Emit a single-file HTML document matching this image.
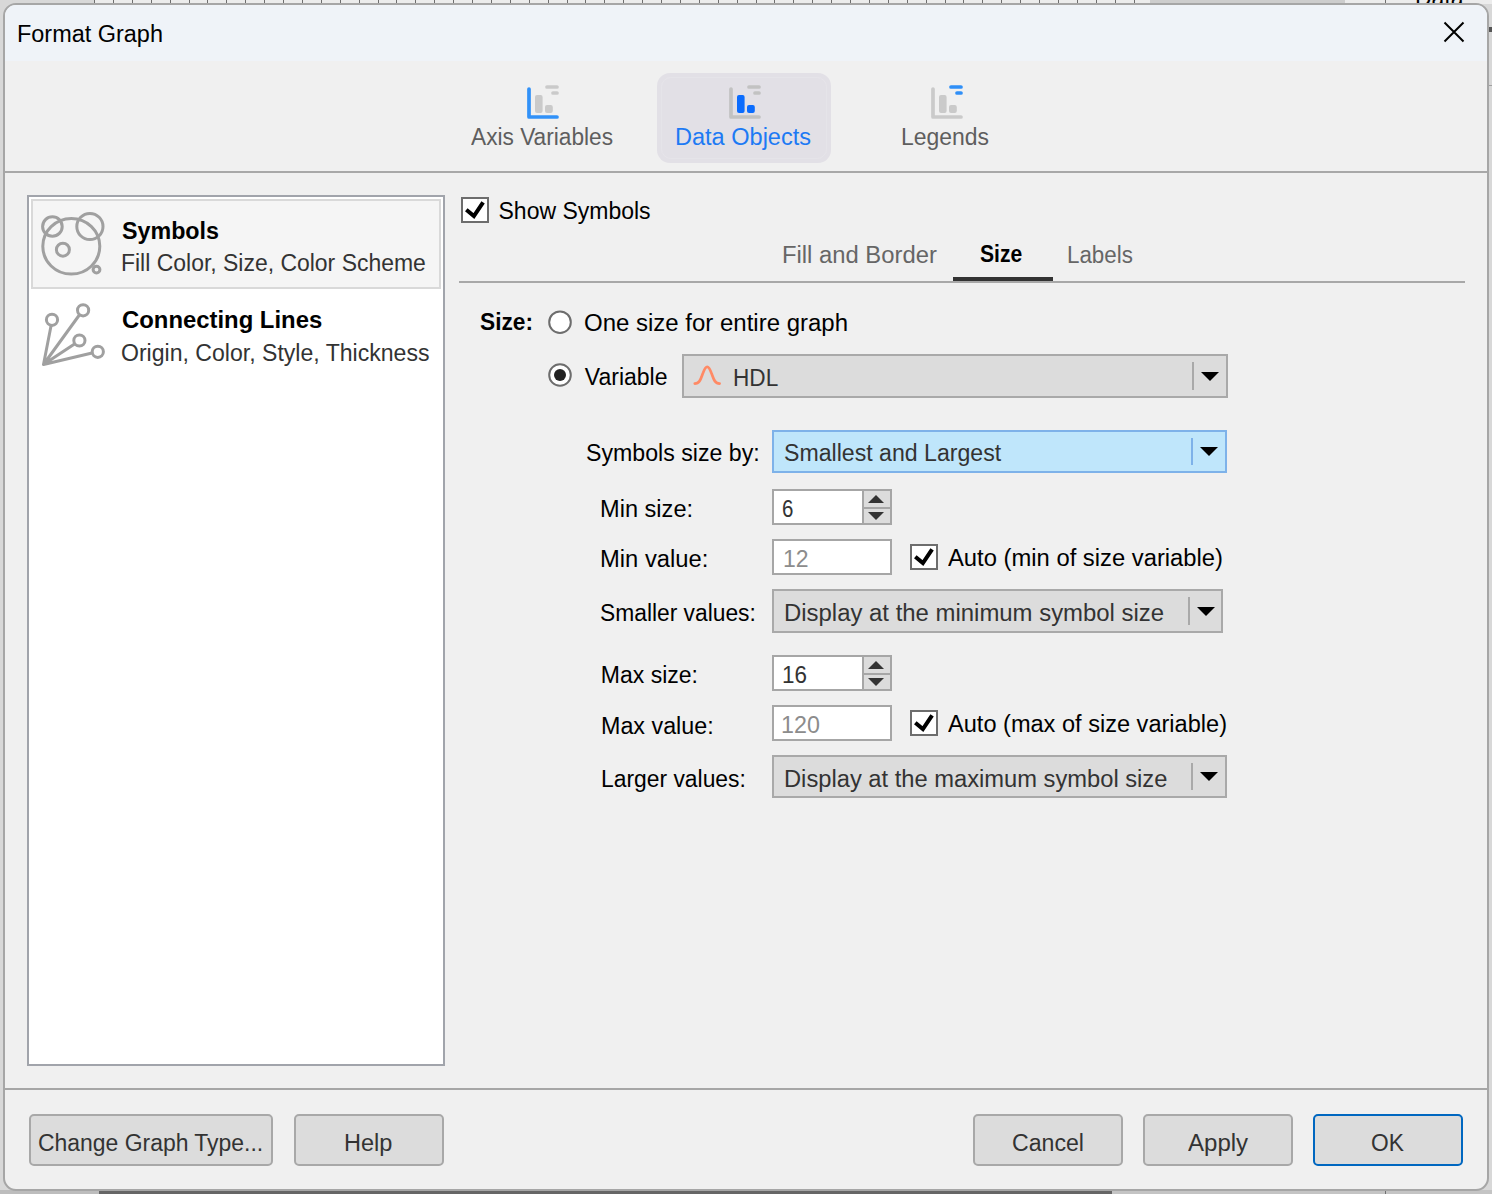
<!DOCTYPE html><html><head><meta charset="utf-8"><style>
html,body{margin:0;padding:0;width:1492px;height:1194px;overflow:hidden;background:#d8d8d8;}
body{position:relative;font-family:"Liberation Sans",sans-serif;}
.t{position:absolute;white-space:nowrap;transform-origin:0 0;}
#bg{position:absolute;left:0;top:0;width:1492px;height:1194px;background:#d8d8d8;}
#dlg{position:absolute;left:3px;top:3px;width:1482px;height:1184px;border:2px solid #a6a6a6;border-radius:13px;background:#f0f0f0;overflow:hidden;}
#title{position:absolute;left:0;top:0;width:100%;height:56px;background:#eff3f8;}
</style></head><body><div id="bg"></div>
<div style="position:absolute;left:94px;top:0;width:1056px;height:4px;background:#ececec"></div><div style="position:absolute;left:94.0px;top:0;width:1px;height:4px;background:#6e6e6e"></div><div style="position:absolute;left:112.9px;top:0;width:1px;height:4px;background:#6e6e6e"></div><div style="position:absolute;left:131.8px;top:0;width:1px;height:4px;background:#6e6e6e"></div><div style="position:absolute;left:150.7px;top:0;width:1px;height:4px;background:#6e6e6e"></div><div style="position:absolute;left:169.6px;top:0;width:1px;height:4px;background:#6e6e6e"></div><div style="position:absolute;left:188.5px;top:0;width:1px;height:4px;background:#6e6e6e"></div><div style="position:absolute;left:207.4px;top:0;width:1px;height:4px;background:#6e6e6e"></div><div style="position:absolute;left:226.3px;top:0;width:1px;height:4px;background:#6e6e6e"></div><div style="position:absolute;left:245.2px;top:0;width:1px;height:4px;background:#6e6e6e"></div><div style="position:absolute;left:264.1px;top:0;width:1px;height:4px;background:#6e6e6e"></div><div style="position:absolute;left:283.0px;top:0;width:1px;height:4px;background:#6e6e6e"></div><div style="position:absolute;left:301.9px;top:0;width:1px;height:4px;background:#6e6e6e"></div><div style="position:absolute;left:320.8px;top:0;width:1px;height:4px;background:#6e6e6e"></div><div style="position:absolute;left:339.7px;top:0;width:1px;height:4px;background:#6e6e6e"></div><div style="position:absolute;left:358.6px;top:0;width:1px;height:4px;background:#6e6e6e"></div><div style="position:absolute;left:377.5px;top:0;width:1px;height:4px;background:#6e6e6e"></div><div style="position:absolute;left:396.4px;top:0;width:1px;height:4px;background:#6e6e6e"></div><div style="position:absolute;left:415.3px;top:0;width:1px;height:4px;background:#6e6e6e"></div><div style="position:absolute;left:434.2px;top:0;width:1px;height:4px;background:#6e6e6e"></div><div style="position:absolute;left:453.1px;top:0;width:1px;height:4px;background:#6e6e6e"></div><div style="position:absolute;left:472.0px;top:0;width:1px;height:4px;background:#6e6e6e"></div><div style="position:absolute;left:490.9px;top:0;width:1px;height:4px;background:#6e6e6e"></div><div style="position:absolute;left:509.8px;top:0;width:1px;height:4px;background:#6e6e6e"></div><div style="position:absolute;left:528.7px;top:0;width:1px;height:4px;background:#6e6e6e"></div><div style="position:absolute;left:547.6px;top:0;width:1px;height:4px;background:#6e6e6e"></div><div style="position:absolute;left:566.5px;top:0;width:1px;height:4px;background:#6e6e6e"></div><div style="position:absolute;left:585.4px;top:0;width:1px;height:4px;background:#6e6e6e"></div><div style="position:absolute;left:604.3px;top:0;width:1px;height:4px;background:#6e6e6e"></div><div style="position:absolute;left:623.2px;top:0;width:1px;height:4px;background:#6e6e6e"></div><div style="position:absolute;left:642.1px;top:0;width:1px;height:4px;background:#6e6e6e"></div><div style="position:absolute;left:661.0px;top:0;width:1px;height:4px;background:#6e6e6e"></div><div style="position:absolute;left:679.9px;top:0;width:1px;height:4px;background:#6e6e6e"></div><div style="position:absolute;left:698.8px;top:0;width:1px;height:4px;background:#6e6e6e"></div><div style="position:absolute;left:717.7px;top:0;width:1px;height:4px;background:#6e6e6e"></div><div style="position:absolute;left:736.6px;top:0;width:1px;height:4px;background:#6e6e6e"></div><div style="position:absolute;left:755.5px;top:0;width:1px;height:4px;background:#6e6e6e"></div><div style="position:absolute;left:774.4px;top:0;width:1px;height:4px;background:#6e6e6e"></div><div style="position:absolute;left:793.3px;top:0;width:1px;height:4px;background:#6e6e6e"></div><div style="position:absolute;left:812.2px;top:0;width:1px;height:4px;background:#6e6e6e"></div><div style="position:absolute;left:831.1px;top:0;width:1px;height:4px;background:#6e6e6e"></div><div style="position:absolute;left:850.0px;top:0;width:1px;height:4px;background:#6e6e6e"></div><div style="position:absolute;left:868.9px;top:0;width:1px;height:4px;background:#6e6e6e"></div><div style="position:absolute;left:887.8px;top:0;width:1px;height:4px;background:#6e6e6e"></div><div style="position:absolute;left:906.7px;top:0;width:1px;height:4px;background:#6e6e6e"></div><div style="position:absolute;left:925.6px;top:0;width:1px;height:4px;background:#6e6e6e"></div><div style="position:absolute;left:944.5px;top:0;width:1px;height:4px;background:#6e6e6e"></div><div style="position:absolute;left:963.4px;top:0;width:1px;height:4px;background:#6e6e6e"></div><div style="position:absolute;left:982.3px;top:0;width:1px;height:4px;background:#6e6e6e"></div><div style="position:absolute;left:1001.2px;top:0;width:1px;height:4px;background:#6e6e6e"></div><div style="position:absolute;left:1020.1px;top:0;width:1px;height:4px;background:#6e6e6e"></div><div style="position:absolute;left:1039.0px;top:0;width:1px;height:4px;background:#6e6e6e"></div><div style="position:absolute;left:1057.9px;top:0;width:1px;height:4px;background:#6e6e6e"></div><div style="position:absolute;left:1076.8px;top:0;width:1px;height:4px;background:#6e6e6e"></div><div style="position:absolute;left:1095.7px;top:0;width:1px;height:4px;background:#6e6e6e"></div><div style="position:absolute;left:1114.6px;top:0;width:1px;height:4px;background:#6e6e6e"></div><div style="position:absolute;left:1133.5px;top:0;width:1px;height:4px;background:#6e6e6e"></div>
<div style="position:absolute;left:1150px;top:0;width:195px;height:4px;background:#cdcdcd"></div>
<div style="position:absolute;left:1345px;top:0;width:147px;height:4px;background:#ececec"></div>
<div style="position:absolute;left:0;top:1190px;width:99px;height:4px;background:#bdbdbd"></div>
<div style="position:absolute;left:99px;top:1190px;width:1013px;height:4px;background:#666"></div>
<div style="position:absolute;left:1112px;top:1190px;width:380px;height:4px;background:#c4c4c4"></div>
<div style="position:absolute;left:1385px;top:1190px;width:1px;height:4px;background:#707070"></div>
<div style="position:absolute;left:1385px;top:0;width:1px;height:4px;background:#707070"></div>
<div class="t" style="left:1415px;top:-13.5px;font-size:23px;line-height:23px;color:#000">Data</div>
<div style="position:absolute;left:1489px;top:27px;width:3px;height:5px;background:#555"></div>
<div style="position:absolute;left:1489px;top:85px;width:3px;height:1px;background:#a0a0a0"></div>
<div id="dlg"><div id="title"></div></div>
<div class="t" style="left:17.20px;top:22.80px;font-size:23px;line-height:23px;color:#000;transform:scaleX(1.0194);">Format Graph</div>
<svg style="position:absolute;left:0;top:0" width="1492" height="1194"><path d="M1444.5 22.5L1463.5 41.5M1463.5 22.5L1444.5 41.5" stroke="#000" stroke-width="2" fill="none"/></svg>
<div style="position:absolute;left:657px;top:73px;width:174px;height:90px;border-radius:13px;background:#e2e0e6"></div>
<div style="position:absolute;left:661px;top:77px;width:164px;height:80px;border-radius:10px;border:1px solid rgba(255,255,255,0.13)"></div>
<svg style="position:absolute;left:0;top:0" width="1492" height="200"><path d="M529 89V117H557" stroke="#3191f8" stroke-width="3.7" stroke-linecap="round" stroke-linejoin="round" fill="none"/><rect x="535" y="95" width="7.6" height="18" rx="2" fill="#cacaca"/><rect x="545" y="105" width="7.8" height="8" rx="2" fill="#cacaca"/><path d="M547 87H557M553 93H557" stroke="#cacaca" stroke-width="3.7" stroke-linecap="round" fill="none"/><path d="M731 89V117H759" stroke="#c2c2c2" stroke-width="3.7" stroke-linecap="round" stroke-linejoin="round" fill="none"/><rect x="737" y="95" width="7.6" height="18" rx="2" fill="#0b6cfe"/><rect x="747" y="105" width="7.8" height="8" rx="2" fill="#0b6cfe"/><path d="M749 87H759M755 93H759" stroke="#c2c2c2" stroke-width="3.7" stroke-linecap="round" fill="none"/><path d="M933 89V117H961" stroke="#cacaca" stroke-width="3.7" stroke-linecap="round" stroke-linejoin="round" fill="none"/><rect x="939" y="95" width="7.6" height="18" rx="2" fill="#cacaca"/><rect x="949" y="105" width="7.8" height="8" rx="2" fill="#cacaca"/><path d="M951 87H961M957 93H961" stroke="#2f8ff7" stroke-width="3.7" stroke-linecap="round" fill="none"/></svg>
<div class="t" style="left:471.00px;top:126.30px;font-size:23px;line-height:23px;color:#5e5e5e;transform:scaleX(0.9860);">Axis Variables</div>
<div class="t" style="left:675.00px;top:126.30px;font-size:23px;line-height:23px;color:#1d7af4;transform:scaleX(1.0232);">Data Objects</div>
<div class="t" style="left:901.00px;top:126.30px;font-size:23px;line-height:23px;color:#5e5e5e;transform:scaleX(0.9973);">Legends</div>
<div style="position:absolute;left:5px;top:171px;width:1482px;height:2px;background:#a8a8a8"></div>
<div style="position:absolute;left:27px;top:195px;width:414px;height:867px;border:2px solid #a1a4ab;background:#fff"></div>
<div style="position:absolute;left:31px;top:199px;width:406px;height:86px;border:2px solid #d9d9d9;background:#f5f5f5"></div>
<svg style="position:absolute;left:0;top:0" width="460" height="400" fill="none" stroke="#a0a0a0" stroke-width="3"><ellipse cx="71.3" cy="246.3" rx="28.5" ry="27.8"/><circle cx="52.4" cy="226.5" r="9.8"/><circle cx="89.9" cy="226.5" r="13.1"/><circle cx="62.9" cy="249.7" r="6.5"/><circle cx="96.5" cy="269.6" r="3.4"/><path d="M43.5 364.5L51 326M43.5 364.5L79 315.5M43.5 364.5L74.5 344M43.5 364.5L91 353.3" stroke-linecap="round"/><circle cx="52" cy="319.8" r="5.6"/><circle cx="83.1" cy="310.3" r="5.6"/><circle cx="79.4" cy="340.5" r="5.6"/><circle cx="97.8" cy="351.8" r="5.6"/></svg>
<div class="t" style="left:122.00px;top:219.99px;font-size:23.5px;line-height:23.5px;color:#000;font-weight:bold;transform:scaleX(0.9903);">Symbols</div>
<div class="t" style="left:120.80px;top:251.70px;font-size:23px;line-height:23px;color:#333;transform:scaleX(0.9978);">Fill Color, Size, Color Scheme</div>
<div class="t" style="left:122.20px;top:309.39px;font-size:23.5px;line-height:23.5px;color:#000;font-weight:bold;transform:scaleX(1.0155);">Connecting Lines</div>
<div class="t" style="left:121.20px;top:341.80px;font-size:23px;line-height:23px;color:#333;transform:scaleX(1.0028);">Origin, Color, Style, Thickness</div>
<div style="position:absolute;left:461px;top:197px;width:24px;height:22px;border:2px solid #6d6d6d;background:#fff"></div><svg style="position:absolute;left:461px;top:197px" width="28" height="26"><path d="M5.3 12.7L12.9 19.1L22.1 5.3" stroke="#000" stroke-width="4" fill="none"/></svg>
<div class="t" style="left:498.50px;top:200.00px;font-size:23px;line-height:23px;color:#000;">Show Symbols</div>
<div class="t" style="left:781.60px;top:243.60px;font-size:23px;line-height:23px;color:#666;transform:scaleX(1.0352);">Fill and Border</div>
<div class="t" style="left:979.80px;top:243.19px;font-size:23.5px;line-height:23.5px;color:#000;font-weight:bold;transform:scaleX(0.8979);">Size</div>
<div class="t" style="left:1067.10px;top:243.60px;font-size:23px;line-height:23px;color:#666;transform:scaleX(0.9714);">Labels</div>
<div style="position:absolute;left:953px;top:277px;width:100px;height:4px;background:#333"></div>
<div style="position:absolute;left:459px;top:281px;width:1006px;height:2px;background:#a8a8a8"></div>
<div class="t" style="left:479.80px;top:311.39px;font-size:23.5px;line-height:23.5px;color:#000;font-weight:bold;transform:scaleX(0.9654);">Size:</div>
<svg style="position:absolute;left:0;top:0" width="1492" height="420"><circle cx="560" cy="322.2" r="10.8" fill="#fff" stroke="#6d6d6d" stroke-width="2"/><circle cx="560" cy="375" r="10.8" fill="#fff" stroke="#6d6d6d" stroke-width="2"/><circle cx="560" cy="375" r="6" fill="#222"/></svg>
<div class="t" style="left:583.90px;top:312.00px;font-size:23px;line-height:23px;color:#000;transform:scaleX(1.0430);">One size for entire graph</div>
<div class="t" style="left:584.80px;top:365.90px;font-size:23px;line-height:23px;color:#000;">Variable</div>
<div style="position:absolute;left:682px;top:354px;width:542px;height:40px;border:2px solid #a9a9a9;background:#dcdcdc"></div><div style="position:absolute;left:1192px;top:362px;width:2px;height:28px;background:#a9a9a9"></div><svg style="position:absolute;left:1201px;top:371.5px" width="18" height="9"><path d="M0 0H18L9 9Z" fill="#000"/></svg>
<div class="t" style="left:732.80px;top:367.10px;font-size:23px;line-height:23px;color:#333;transform:scaleX(0.9838);">HDL</div>
<svg style="position:absolute;left:690px;top:362px" width="34" height="28"><path d="M4.8 21.6C10 21.6 11 16 13 11C15 5.5 16 4.8 17.2 4.8C18.4 4.8 19.4 5.5 21.4 11C23.4 16 24.4 21.6 29.6 21.6" stroke="#ff8a65" stroke-width="2.7" fill="none" stroke-linecap="round"/></svg>
<div class="t" style="left:585.50px;top:442.00px;font-size:23px;line-height:23px;color:#000;transform:scaleX(1.0063);">Symbols size by:</div>
<div style="position:absolute;left:772px;top:430px;width:451px;height:39px;border:2px solid #7eb2e9;background:#bfe6fb"></div><div style="position:absolute;left:1191px;top:438px;width:2px;height:27px;background:#7eb2e9"></div><svg style="position:absolute;left:1200px;top:447.0px" width="18" height="9"><path d="M0 0H18L9 9Z" fill="#000"/></svg>
<div class="t" style="left:784.00px;top:442.00px;font-size:23px;line-height:23px;color:#333;transform:scaleX(1.0053);">Smallest and Largest</div>
<div class="t" style="left:600.10px;top:498.10px;font-size:23px;line-height:23px;color:#000;transform:scaleX(1.0258);">Min size:</div>
<div style="position:absolute;left:772px;top:489px;width:116px;height:32px;border:2px solid #a6a6a6;background:#fff"></div><div style="position:absolute;left:862px;top:489px;width:2px;height:36px;background:#a6a6a6"></div><div style="position:absolute;left:864px;top:491px;width:26px;height:16px;background:#dcdcdc"></div><div style="position:absolute;left:864px;top:509px;width:26px;height:14px;background:#dcdcdc"></div><div style="position:absolute;left:864px;top:507px;width:26px;height:2px;background:#a6a6a6"></div><svg style="position:absolute;left:868px;top:495px" width="16" height="26"><path d="M0 8H16L8 0Z M0 17H16L8 25Z" fill="#333"/></svg>
<div class="t" style="left:782.00px;top:497.50px;font-size:23px;line-height:23px;color:#333;transform:scaleX(0.8915);">6</div>
<div class="t" style="left:600.10px;top:547.60px;font-size:23px;line-height:23px;color:#000;transform:scaleX(1.0328);">Min value:</div>
<div style="position:absolute;left:772px;top:539px;width:116px;height:32px;border:2px solid #a6a6a6;background:#fff"></div>
<div class="t" style="left:783.00px;top:547.50px;font-size:23px;line-height:23px;color:#8c8c8c;">12</div>
<div style="position:absolute;left:910px;top:544px;width:24px;height:22px;border:2px solid #6d6d6d;background:#fff"></div><svg style="position:absolute;left:910px;top:544px" width="28" height="26"><path d="M5.3 12.7L12.9 19.1L22.1 5.3" stroke="#000" stroke-width="4" fill="none"/></svg>
<div class="t" style="left:948.20px;top:547.00px;font-size:23px;line-height:23px;color:#000;transform:scaleX(1.0343);">Auto (min of size variable)</div>
<div class="t" style="left:600.10px;top:601.80px;font-size:23px;line-height:23px;color:#000;transform:scaleX(0.9912);">Smaller values:</div>
<div style="position:absolute;left:772px;top:589px;width:447px;height:40px;border:2px solid #a9a9a9;background:#dcdcdc"></div><div style="position:absolute;left:1188px;top:597px;width:2px;height:28px;background:#a9a9a9"></div><svg style="position:absolute;left:1197px;top:606.5px" width="18" height="9"><path d="M0 0H18L9 9Z" fill="#000"/></svg>
<div class="t" style="left:784.00px;top:602.00px;font-size:23px;line-height:23px;color:#333;transform:scaleX(1.0398);">Display at the minimum symbol size</div>
<div class="t" style="left:600.80px;top:664.20px;font-size:23px;line-height:23px;color:#000;">Max size:</div>
<div style="position:absolute;left:772px;top:655px;width:116px;height:32px;border:2px solid #a6a6a6;background:#fff"></div><div style="position:absolute;left:862px;top:655px;width:2px;height:36px;background:#a6a6a6"></div><div style="position:absolute;left:864px;top:657px;width:26px;height:16px;background:#dcdcdc"></div><div style="position:absolute;left:864px;top:675px;width:26px;height:14px;background:#dcdcdc"></div><div style="position:absolute;left:864px;top:673px;width:26px;height:2px;background:#a6a6a6"></div><svg style="position:absolute;left:868px;top:661px" width="16" height="26"><path d="M0 8H16L8 0Z M0 17H16L8 25Z" fill="#333"/></svg>
<div class="t" style="left:782.40px;top:663.50px;font-size:23px;line-height:23px;color:#333;transform:scaleX(0.9753);">16</div>
<div class="t" style="left:600.80px;top:714.50px;font-size:23px;line-height:23px;color:#000;transform:scaleX(1.0130);">Max value:</div>
<div style="position:absolute;left:772px;top:705px;width:116px;height:32px;border:2px solid #a6a6a6;background:#fff"></div>
<div class="t" style="left:781.40px;top:713.50px;font-size:23px;line-height:23px;color:#8c8c8c;transform:scaleX(1.0116);">120</div>
<div style="position:absolute;left:910px;top:710px;width:24px;height:22px;border:2px solid #6d6d6d;background:#fff"></div><svg style="position:absolute;left:910px;top:710px" width="28" height="26"><path d="M5.3 12.7L12.9 19.1L22.1 5.3" stroke="#000" stroke-width="4" fill="none"/></svg>
<div class="t" style="left:948.20px;top:713.00px;font-size:23px;line-height:23px;color:#000;transform:scaleX(1.0247);">Auto (max of size variable)</div>
<div class="t" style="left:600.80px;top:768.10px;font-size:23px;line-height:23px;color:#000;transform:scaleX(0.9938);">Larger values:</div>
<div style="position:absolute;left:772px;top:755px;width:451px;height:39px;border:2px solid #a9a9a9;background:#dcdcdc"></div><div style="position:absolute;left:1191px;top:763px;width:2px;height:27px;background:#a9a9a9"></div><svg style="position:absolute;left:1200px;top:772.0px" width="18" height="9"><path d="M0 0H18L9 9Z" fill="#000"/></svg>
<div class="t" style="left:784.10px;top:768.00px;font-size:23px;line-height:23px;color:#333;transform:scaleX(1.0308);">Display at the maximum symbol size</div>
<div style="position:absolute;left:5px;top:1088px;width:1482px;height:2px;background:#a6a6a6"></div>
<div style="position:absolute;left:29px;top:1114px;width:240px;height:48px;border:2px solid #a8a8a8;border-radius:5px;background:#dcdcdc"></div>
<div class="t" style="left:38.40px;top:1131.70px;font-size:23px;line-height:23px;color:#333;transform:scaleX(0.9967);">Change Graph Type...</div>
<div style="position:absolute;left:294px;top:1114px;width:146px;height:48px;border:2px solid #a8a8a8;border-radius:5px;background:#dcdcdc"></div>
<div class="t" style="left:343.50px;top:1131.70px;font-size:23px;line-height:23px;color:#333;transform:scaleX(1.0239);">Help</div>
<div style="position:absolute;left:973px;top:1114px;width:146px;height:48px;border:2px solid #a8a8a8;border-radius:5px;background:#dcdcdc"></div>
<div class="t" style="left:1012.00px;top:1131.70px;font-size:23px;line-height:23px;color:#333;transform:scaleX(1.0051);">Cancel</div>
<div style="position:absolute;left:1143px;top:1114px;width:146px;height:48px;border:2px solid #a8a8a8;border-radius:5px;background:#dcdcdc"></div>
<div class="t" style="left:1188.10px;top:1131.70px;font-size:23px;line-height:23px;color:#333;transform:scaleX(1.0450);">Apply</div>
<div style="position:absolute;left:1313px;top:1114px;width:146px;height:48px;border:2px solid #0067c0;border-radius:5px;background:#dcdcdc"></div>
<div class="t" style="left:1371.10px;top:1131.70px;font-size:23px;line-height:23px;color:#333;transform:scaleX(0.9895);">OK</div></body></html>
